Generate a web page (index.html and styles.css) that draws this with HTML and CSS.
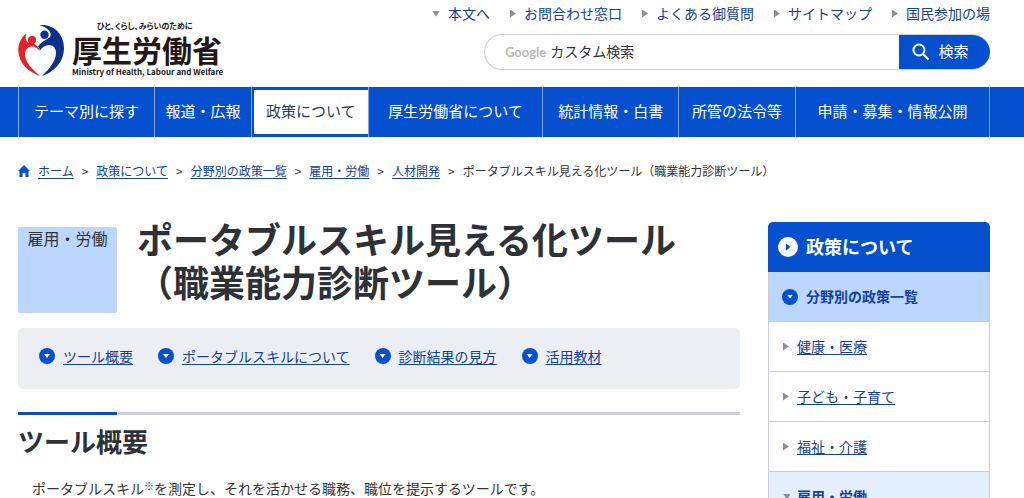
FILE: index.html
```html
<!DOCTYPE html>
<html lang="ja">
<head>
  <meta charset="UTF-8">
  <meta name="viewport" content="width=device-width, initial-scale=1.0">
  <title>ポータブルスキル見える化ツール（職業能力診断ツール）</title>
  <link rel="stylesheet" href="styles.css">
</head>
<body>
  <header class="header wrap">
    <a class="logo" href="#">
      <svg class="logo-mark" viewBox="0 0 46 52" aria-hidden="true">
        <path fill="#0b318f" d="M21.500 .3C34-1.500 46 8 46 23C46 37 36 47 24 51C32 43 38 36 38 27.500C38 22.500 34.500 19.500 30.500 20C26.500 20.500 24 22.500 22 25.500C21.500 23.500 21 22.500 20 21.500C23 17 28 15 31.500 12.500C35 9 31 3 21.500 .3z"/>
        <path fill="#e6212a" d="M8.500 8.500C3 12 0 19 .3 26C1 38 10 47 22 51C14 44 7 37 7 29.500C7 24 10.500 21.500 14 21.500C17 21.500 19.500 23 21.500 26C21.500 22.500 18.500 20 15.500 18.800C12 17.800 9.500 18 8.300 15.500C7.300 13.500 7.500 11 8.500 8.500z"/>
        <circle cx="26.500" cy="9.700" r="4.200" fill="#0b318f"/>
        <circle cx="14" cy="15" r="4" fill="#e6212a"/>
      </svg>
      <span class="logo-text">
        <span class="logo-tagline">ひと、くらし、みらいのために</span>
        <span class="logo-name">厚生労働省</span>
        <span class="logo-en">Ministry of Health, Labour and Welfare</span>
      </span>
    </a>
    <div class="header-right">
      <ul class="header-links">
        <li><span class="arrow arrow-down"></span><a href="#main">本文へ</a></li>
        <li><span class="arrow"></span><a href="#">お問合わせ窓口</a></li>
        <li><span class="arrow"></span><a href="#">よくある御質問</a></li>
        <li><span class="arrow"></span><a href="#">サイトマップ</a></li>
        <li><span class="arrow"></span><a href="#">国民参加の場</a></li>
      </ul>
      <form class="search">
        <label class="search-label" for="search">Google</label>
        <input class="search-input" type="text" id="search" placeholder="カスタム検索">
        <button class="search-button" type="button">
          <svg viewBox="0 0 18 18" aria-hidden="true">
            <circle cx="7" cy="7" r="5.500"/>
            <path d="M11 11l5.500 5.500"/>
          </svg>
          <span>検索</span>
        </button>
      </form>
    </div>
  </header>

  <nav class="nav wrap">
    <ul class="nav-list">
      <li><a href="#">テーマ別に探す</a></li>
      <li><a href="#">報道・広報</a></li>
      <li class="active"><a href="#">政策について</a></li>
      <li><a href="#">厚生労働省について</a></li>
      <li><a href="#">統計情報・白書</a></li>
      <li><a href="#">所管の法令等</a></li>
      <li><a href="#">申請・募集・情報公開</a></li>
    </ul>
  </nav>

  <div class="breadcrumb wrap">
    <svg class="home-icon" viewBox="0 0 12 12" aria-hidden="true">
      <path d="M6 0L12 6H10.500V12H7.500V8H4.500V12H1.500V6H0z"/>
    </svg>
    <a href="#">ホーム</a>
    <span>&gt;</span>
    <a href="#">政策について</a>
    <span>&gt;</span>
    <a href="#">分野別の政策一覧</a>
    <span>&gt;</span>
    <a href="#">雇用・労働</a>
    <span>&gt;</span>
    <a href="#">人材開発</a>
    <span>&gt;</span>
    <span>ポータブルスキル見える化ツール（職業能力診断ツール）</span>
  </div>

  <div class="content wrap">
    <main class="main" id="main">
      <div class="title">
        <p class="category">雇用・労働</p>
        <h1>ポータブルスキル見える化ツール<br>（職業能力診断ツール）</h1>
      </div>

      <!-- In-page links -->
      <ul class="anchors">
        <li><span class="circle"></span><a href="#gaiyo">ツール概要</a></li>
        <li><span class="circle"></span><a href="#">ポータブルスキルについて</a></li>
        <li><span class="circle"></span><a href="#">診断結果の見方</a></li>
        <li><span class="circle"></span><a href="#">活用教材</a></li>
      </ul>

      <h2 id="gaiyo">ツール概要</h2>
      <p class="lead">　ポータブルスキル<sup>※</sup>を測定し、それを活かせる職務、職位を提示するツールです。</p>
    </main>

    <!-- Side menu -->
    <aside class="side">
      <p class="side-title"><span class="circle circle-white"></span><a href="#">政策について</a></p>
      <p class="side-sub"><span class="circle"></span><a href="#">分野別の政策一覧</a></p>
      <ul class="side-list">
        <li><span class="arrow"></span><a href="#">健康・医療</a></li>
        <li><span class="arrow"></span><a href="#">子ども・子育て</a></li>
        <li><span class="arrow"></span><a href="#">福祉・介護</a></li>
        <li class="current"><span class="arrow arrow-down"></span><a href="#">雇用・労働</a></li>
      </ul>
    </aside>
  </div>
</body>
</html>
```

FILE: styles.css
```css
* {
  box-sizing: border-box;
}
body {
  margin: 0;
  font-family: "Noto Sans CJK JP", sans-serif;
  font-size: 14px;
  line-height: 20px;
  color: #333;
  background-color: #fff;
}
ul {
  list-style: none;
  margin: 0;
  padding: 0;
}
p, h1, h2 {
  margin: 0;
}
a {
  color: #1241a0;
  text-underline-offset: 2px;
}
.wrap {
  padding-left: 18px;
  padding-right: 34px;
}

/* small markers */
.arrow {
  flex: none;
  width: 6px;
  height: 8px;
  background-color: #8b8f98;
  clip-path: polygon(0 0, 100% 50%, 0 100%);
}
.arrow-down {
  width: 8px;
  height: 6px;
  clip-path: polygon(0 0, 100% 0, 50% 100%);
}
.circle {
  display: flex;
  flex: none;
  align-items: center;
  justify-content: center;
  width: 16px;
  height: 16px;
  border-radius: 50%;
  background-color: #0550ce;
}
.circle::before {
  content: "";
  width: 6px;
  height: 4px;
  background-color: #fff;
  clip-path: polygon(0 0, 100% 0, 50% 100%);
}
.circle-white {
  width: 20px;
  height: 20px;
  background-color: #fff;
}
.circle-white::before {
  width: 5px;
  height: 8px;
  background-color: #0550ce;
  clip-path: polygon(0 0, 100% 50%, 0 100%);
}

/* header */
.header {
  display: flex;
  justify-content: space-between;
  padding-top: 3px;
  padding-bottom: 9px;
}
.logo {
  display: flex;
  gap: 8px;
  padding-top: 17px;
  color: #231815;
  text-decoration: none;
}
.logo-mark {
  width: 46px;
  height: 52px;
  margin-top: 5px;
}
.logo-text {
  display: flex;
  flex-direction: column;
  white-space: nowrap;
}
.logo-tagline {
  padding-left: 25px;
  font-size: 8px;
  font-weight: bold;
  line-height: 12px;
  font-feature-settings: "palt";
}
.logo-name {
  font-size: 30px;
  font-weight: bold;
  line-height: 34px;
}
.logo-en {
  font-size: 8px;
  font-weight: bold;
  line-height: 12px;
}
.header-right {
  display: flex;
  flex-direction: column;
  gap: 10px;
}
.header-links {
  display: flex;
  justify-content: flex-end;
  gap: 20px;
}
.header-links li {
  display: flex;
  align-items: center;
  gap: 8px;
}
.header-links a {
  padding-bottom: 1px;
  text-decoration: none;
}
.search {
  display: flex;
  align-items: center;
  align-self: flex-end;
  width: 506px;
  height: 36px;
  padding-left: 20px;
  border: 1px solid #cacddc;
  border-right: 0;
  border-radius: 18px;
  overflow: hidden;
}
.search-label {
  font-family: Lato, sans-serif;
  font-size: 13px;
  font-weight: bold;
  color: #b8b8b8;
}
.search-input {
  flex: 1;
  min-width: 0;
  padding: 0 4px 2px;
  border: 0;
  outline: 0;
  font: inherit;
}
.search-input::placeholder {
  color: #333;
}
.search-button {
  display: flex;
  align-items: center;
  justify-content: center;
  gap: 8px;
  width: 91px;
  height: 36px;
  padding: 0 8px 0 0;
  border: 0;
  background-color: #0550ce;
  color: #fff;
  font-family: inherit;
  font-size: 15px;
  cursor: pointer;
}
.search-button span {
  padding-bottom: 4px;
}
.search-button svg {
  width: 18px;
  height: 18px;
  fill: none;
  stroke: #fff;
  stroke-width: 2;
}

/* global nav */
.nav {
  background-color: #0550ce;
}
.nav-list {
  display: grid;
  grid-template-columns: 7fr 5fr 6fr 9fr 7fr 6fr 10fr;
  border-right: 1px solid #82a7e6;
}
.nav-list li {
  height: 50px;
  border-left: 1px solid #82a7e6;
}
.nav-list a {
  display: flex;
  align-items: center;
  justify-content: center;
  height: 100%;
  padding-bottom: 2px;
  color: #fff;
  font-size: 15px;
  text-decoration: none;
  white-space: nowrap;
}
.nav-list .active {
  padding: 3px 0 3px 2px;
}
.nav-list .active a {
  background-color: #fff;
  color: #2b3b5c;
}

/* breadcrumb */
.breadcrumb {
  display: flex;
  align-items: center;
  gap: 8px;
  padding-top: 24px;
  font-size: 12px;
}
.home-icon {
  width: 12px;
  height: 12px;
  fill: #0550ce;
}

/* content */
.content {
  display: flex;
  gap: 28px;
  padding-top: 36px;
}
.main {
  flex: 1;
}
.title {
  display: flex;
  align-items: flex-start;
  gap: 20px;
}
.category {
  width: 99px;
  height: 86px;
  margin-top: 10px;
  padding-top: 1px;
  border-radius: 2px;
  background-color: #bbd7ff;
  font-size: 16px;
  text-align: center;
}
h1 {
  color: #2d3138;
  font-size: 36px;
  line-height: 43px;
}
.anchors {
  display: flex;
  flex-wrap: wrap;
  gap: 25px;
  margin-top: 15px;
  padding: 18px 21px 23px;
  border-radius: 5px;
  background-color: #ebeff4;
}
.anchors li {
  display: flex;
  align-items: center;
  gap: 8px;
}
h2 {
  margin-top: 23px;
  padding-top: 9px;
  background: linear-gradient(to right, #0550ce 99px, #cacddc 99px) top / 100% 3px no-repeat;
  color: #2d3138;
  font-size: 26px;
  line-height: 40px;
}
.lead {
  margin-top: 17px;
}
.lead sup {
  font-size: 10px;
  line-height: 0;
  vertical-align: 4px;
}

/* side menu */
.side {
  width: 222px;
  margin-top: 5px;
}
.side a {
  padding-bottom: 2px;
}
.side-title,
.side-sub,
.side-list li {
  display: flex;
  align-items: center;
  height: 50px;
  gap: 8px;
}
.side-title {
  padding-left: 10px;
  border-radius: 5px 5px 0 0;
  background-color: #0550ce;
  font-size: 18px;
  font-weight: bold;
}
.side-title a {
  color: #fff;
  text-decoration: none;
}
.side-sub {
  padding-left: 13px;
  border: 1px solid #cacddc;
  border-top: 0;
  background-color: #bbd7ff;
  font-weight: bold;
}
.side-sub a {
  text-decoration: none;
}
.side-list li {
  padding-left: 14px;
  border: 1px solid #cacddc;
  border-top: 0;
}
.side-list .current {
  background-color: #e3efff;
  font-weight: bold;
}
.side-list .arrow-down {
  margin-right: -2px;
}
```
